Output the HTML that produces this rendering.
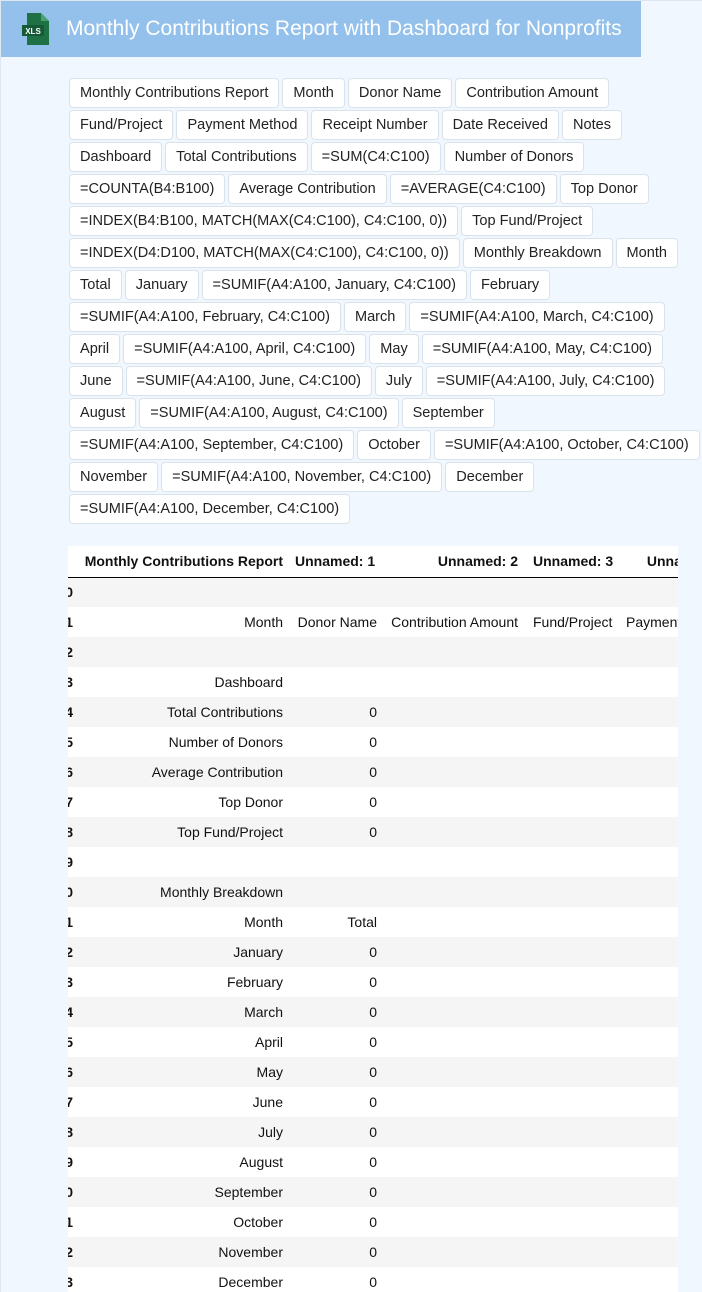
<!DOCTYPE html>
<html><head><meta charset="utf-8"><style>
*{box-sizing:border-box;margin:0;padding:0}
body{width:702px;height:1292px;overflow:hidden;background:#f0f7fe;font-family:"Liberation Sans",Arial,sans-serif;position:relative}
.fr{position:absolute;left:0;top:0;width:702px;height:1292px;border-top:1px solid #dfe6ee;border-left:1px solid #dfe6ee}
.hdr{position:absolute;left:1px;top:1px;width:640px;height:56px;background:#93c1eb;color:#fff;font-size:21px;line-height:55px;padding-left:65px}
.icon{position:absolute;left:22px;top:13px}
.btns{position:absolute;left:69px;top:78px}
.row{white-space:nowrap;height:32px}
.b{display:inline-block;height:30px;line-height:28px;border:1px solid #dbe3ea;border-radius:4px;background:#fff;font-size:14.55px;color:#222;padding:0 10px;margin-right:3px;vertical-align:top}
.tw{position:absolute;left:68px;top:546px;width:610px;height:746px;overflow:hidden;background:#fff}
table{position:absolute;left:-29px;top:0;width:694px;border-collapse:collapse;table-layout:fixed;font-size:14px;color:#111}
td,th{height:30px;white-space:nowrap;overflow:hidden;padding:0 6px;text-align:right}
th{font-weight:bold;border-bottom:1px solid #000;height:31px}
td:first-child,th:first-child{font-weight:bold;padding:0}
tbody tr:nth-child(odd){background:#f5f5f5}
.l{text-align:left}
td:nth-child(5){text-align:left;padding-left:9px}
th:nth-child(5){padding-left:9px}
</style></head><body>
<div class="fr"></div>
<div class="hdr">Monthly Contributions Report with Dashboard for Nonprofits</div>
<svg class="icon" width="28" height="32" viewBox="0 0 28 32"><path d="M5 0h14l8 8v24H5z" fill="#1e7145"/><path d="M19 0v8h8z" fill="#4aa070"/><rect x="0" y="12" width="22" height="11" fill="#155a36"/><text x="11" y="21" font-size="8" fill="#fff" text-anchor="middle" font-family="Liberation Sans" font-weight="bold">XLS</text></svg>
<div class="btns">
<div class="row"><span class="b">Monthly Contributions Report</span><span class="b">Month</span><span class="b">Donor Name</span><span class="b">Contribution Amount</span></div>
<div class="row"><span class="b">Fund/Project</span><span class="b">Payment Method</span><span class="b">Receipt Number</span><span class="b">Date Received</span><span class="b">Notes</span></div>
<div class="row"><span class="b">Dashboard</span><span class="b">Total Contributions</span><span class="b">=SUM(C4:C100)</span><span class="b">Number of Donors</span></div>
<div class="row"><span class="b">=COUNTA(B4:B100)</span><span class="b">Average Contribution</span><span class="b">=AVERAGE(C4:C100)</span><span class="b">Top Donor</span></div>
<div class="row"><span class="b">=INDEX(B4:B100, MATCH(MAX(C4:C100), C4:C100, 0))</span><span class="b">Top Fund/Project</span></div>
<div class="row"><span class="b">=INDEX(D4:D100, MATCH(MAX(C4:C100), C4:C100, 0))</span><span class="b">Monthly Breakdown</span><span class="b">Month</span></div>
<div class="row"><span class="b">Total</span><span class="b">January</span><span class="b">=SUMIF(A4:A100, January, C4:C100)</span><span class="b">February</span></div>
<div class="row"><span class="b">=SUMIF(A4:A100, February, C4:C100)</span><span class="b">March</span><span class="b">=SUMIF(A4:A100, March, C4:C100)</span></div>
<div class="row"><span class="b">April</span><span class="b">=SUMIF(A4:A100, April, C4:C100)</span><span class="b">May</span><span class="b">=SUMIF(A4:A100, May, C4:C100)</span></div>
<div class="row"><span class="b">June</span><span class="b">=SUMIF(A4:A100, June, C4:C100)</span><span class="b">July</span><span class="b">=SUMIF(A4:A100, July, C4:C100)</span></div>
<div class="row"><span class="b">August</span><span class="b">=SUMIF(A4:A100, August, C4:C100)</span><span class="b">September</span></div>
<div class="row"><span class="b">=SUMIF(A4:A100, September, C4:C100)</span><span class="b">October</span><span class="b">=SUMIF(A4:A100, October, C4:C100)</span></div>
<div class="row"><span class="b">November</span><span class="b">=SUMIF(A4:A100, November, C4:C100)</span><span class="b">December</span></div>
<div class="row"><span class="b">=SUMIF(A4:A100, December, C4:C100)</span></div>
</div>
<div class="tw"><table>
<colgroup><col style="width:34px"><col style="width:216px"><col style="width:94px"><col style="width:141px"><col style="width:96px"><col style="width:113px"></colgroup>
<thead><tr><th></th><th>Monthly Contributions Report</th><th class="l">Unnamed: 1</th><th>Unnamed: 2</th><th class="l">Unnamed: 3</th><th>Unnamed: 4</th></tr></thead>
<tbody>
<tr><td>0</td><td></td><td></td><td></td><td></td><td></td></tr>
<tr><td>1</td><td>Month</td><td>Donor Name</td><td>Contribution Amount</td><td>Fund/Project</td><td class="l">Payment Method</td></tr>
<tr><td>2</td><td></td><td></td><td></td><td></td><td></td></tr>
<tr><td>3</td><td>Dashboard</td><td></td><td></td><td></td><td></td></tr>
<tr><td>4</td><td>Total Contributions</td><td>0</td><td></td><td></td><td></td></tr>
<tr><td>5</td><td>Number of Donors</td><td>0</td><td></td><td></td><td></td></tr>
<tr><td>6</td><td>Average Contribution</td><td>0</td><td></td><td></td><td></td></tr>
<tr><td>7</td><td>Top Donor</td><td>0</td><td></td><td></td><td></td></tr>
<tr><td>8</td><td>Top Fund/Project</td><td>0</td><td></td><td></td><td></td></tr>
<tr><td>9</td><td></td><td></td><td></td><td></td><td></td></tr>
<tr><td>10</td><td>Monthly Breakdown</td><td></td><td></td><td></td><td></td></tr>
<tr><td>11</td><td>Month</td><td>Total</td><td></td><td></td><td></td></tr>
<tr><td>12</td><td>January</td><td>0</td><td></td><td></td><td></td></tr>
<tr><td>13</td><td>February</td><td>0</td><td></td><td></td><td></td></tr>
<tr><td>14</td><td>March</td><td>0</td><td></td><td></td><td></td></tr>
<tr><td>15</td><td>April</td><td>0</td><td></td><td></td><td></td></tr>
<tr><td>16</td><td>May</td><td>0</td><td></td><td></td><td></td></tr>
<tr><td>17</td><td>June</td><td>0</td><td></td><td></td><td></td></tr>
<tr><td>18</td><td>July</td><td>0</td><td></td><td></td><td></td></tr>
<tr><td>19</td><td>August</td><td>0</td><td></td><td></td><td></td></tr>
<tr><td>20</td><td>September</td><td>0</td><td></td><td></td><td></td></tr>
<tr><td>21</td><td>October</td><td>0</td><td></td><td></td><td></td></tr>
<tr><td>22</td><td>November</td><td>0</td><td></td><td></td><td></td></tr>
<tr><td>23</td><td>December</td><td>0</td><td></td><td></td><td></td></tr>
</tbody></table></div>
</body></html>
